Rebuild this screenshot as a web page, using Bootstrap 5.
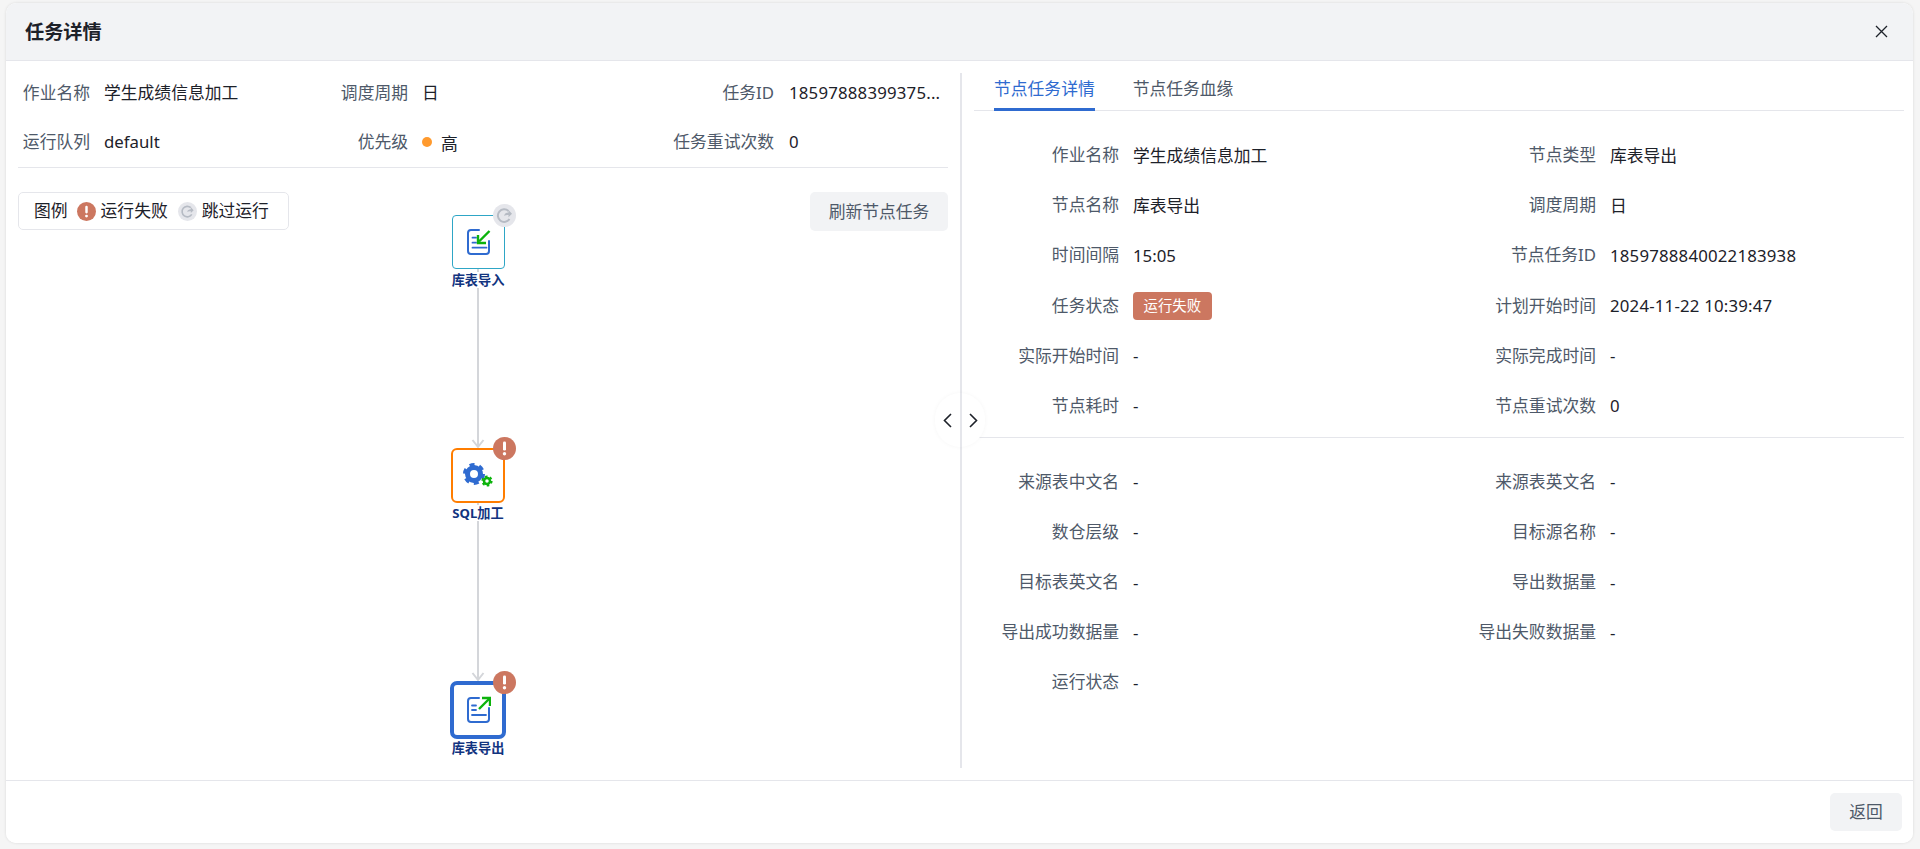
<!DOCTYPE html>
<html lang="zh-CN">
<head>
<meta charset="utf-8">
<title>任务详情</title>
<link href="https://cdn.jsdelivr.net/npm/bootstrap@5.3.0/dist/css/bootstrap.min.css" rel="stylesheet">
<style>
html,body{height:849px;overflow:hidden}
body{background:#f5f5f5;padding:3px 7px 6px 6px;font-family:"Noto Sans","Noto Sans CJK SC",sans-serif;font-size:16.8px;color:#1d2129}
.shell{height:840px;border:0;border-radius:10px;box-shadow:0 0 3px rgba(0,0,0,.12);overflow:hidden}
.shell .card-header{height:58px;background:#f2f3f5;border-bottom:1px solid #e5e6eb;padding:0 25px 0 19px;border-radius:10px 10px 0 0!important;flex:none}
.ttl{font-size:19.2px;font-weight:700;color:#1d2129;line-height:1}
.xbtn{width:13px;height:13px;display:flex;border:0;background:none;padding:0}
.shell .card-body{padding:0;min-height:0}
.leftp{width:954px;padding:0 12px;flex:none}
.info{display:grid;grid-template-columns:72px 246px 72px 241px 125px 174px;grid-auto-rows:49px;padding-top:8px;border-bottom:1px solid #e5e6eb;height:107px;align-items:center}
.lb{color:#4e5969;text-align:right;white-space:nowrap;line-height:1.2}
.val{padding-left:14px;white-space:nowrap;line-height:1.2}
.val.wide{padding-left:15px}
.num{letter-spacing:.2px}
.dotv{display:inline-block;width:10px;height:10px;border-radius:50%;background:#ff9a2e;margin-right:9px;vertical-align:1px}
.hi{position:relative;top:2px}
.canv{position:relative;height:612px}
.legend{position:absolute;left:0;top:24px;width:271px;height:38px;border:1px solid #e5e6eb;border-radius:5px;padding-left:15px;gap:5px}
.lgi{width:19px;height:19px;flex:none}
.lgi.first{margin-left:4px}
.lgi.sec{margin-left:5px}
.refbtn{position:absolute;right:0;top:24px;width:138px;height:39px;background:#f2f3f5;border:0;border-radius:5px;color:#4e5969;font-size:16.8px;padding:0}
.wire{position:absolute;left:0;top:0;width:930px;height:612px}
.gnode{position:absolute;background:#fff;display:flex;align-items:center;justify-content:center}
.n1{left:434px;top:47px;width:53px;height:54px;border:1px solid #2ea6c6;border-radius:4px}
.n2{left:433px;top:280px;width:54px;height:55px;border:2px solid #ff7d00;border-radius:6px}
.n3{left:432px;top:513px;width:56px;height:58px;border:4px solid #2f6bd0;border-radius:7px}
.gbadge{position:absolute;width:23px;height:23px}
.nlabel{position:absolute;width:80px;text-align:center;font-size:13.2px;font-weight:700;color:#12347f;line-height:16px;background:#fff}
.vdiv{width:2px;flex:none;background:#e5e6eb;margin:12px 0;position:relative}
.pill{position:absolute;left:-25px;top:320px;width:50px;height:54px;border-radius:25px;background:#fff;box-shadow:0 0 4px rgba(0,0,0,.04);z-index:1}
.pillline{position:absolute;left:0;top:320px;width:2px;height:54px;background:#e5e6eb;z-index:2}
.chev{position:absolute;width:9px;height:15px;top:340px;z-index:3}
.chev.lf{left:-17px}
.chev.rt{left:9px}
.rightp{padding:0 9px 0 12px;flex:1;min-width:0}
.tabbar{height:50px;border-bottom:1px solid #e5e6eb;padding-left:20px;gap:38px;flex-wrap:nowrap}
.tabbar .nav-link{padding:0;height:50px;line-height:55px;color:#4e5969;font-size:16.8px;border-bottom:3px solid transparent}
.tabbar .nav-link.active{color:#2f6bd0;border-bottom-color:#2f6bd0}
.dgrid{display:grid;grid-template-columns:477px 1fr;grid-auto-rows:50.2px;align-items:center}
.dcell{display:flex;gap:14px;align-items:center}
.dcell .lb{width:145px;flex:none}
.sec1{padding-top:19px}
.sep{border-top:1px solid #e5e6eb;margin:5.5px 0 19px 0}
.stag{display:inline-block;background:#cc7760;color:#fff;font-size:14.4px;line-height:28px;height:28px;padding:0 10.500px;border-radius:4px}
.shell .card-footer{height:63px;flex:none;background:#fff;border-top:1px solid #e5e6eb;padding:12px 11px 0 0;border-radius:0!important}
.backbtn{width:72px;height:38px;background:#f2f3f5;border:0;border-radius:5px;color:#4e5969;font-size:16.8px;padding:0}
</style>
</head>
<body>
<div class="card shell">
  <div class="card-header d-flex align-items-center justify-content-between">
    <span class="ttl">任务详情</span>
    <button type="button" class="xbtn" aria-label="关闭"><svg width="13" height="13" viewBox="0 0 13 13" fill="none" stroke="#1d2129" stroke-width="1.300"><path d="M1 1l11 11M12 1 1 12"/></svg></button>
  </div>
  <div class="card-body d-flex flex-grow-1">
    <div class="leftp">
      <div class="info">
        <div class="lb">作业名称</div><div class="val">学生成绩信息加工</div>
        <div class="lb">调度周期</div><div class="val">日</div>
        <div class="lb">任务ID</div><div class="val wide num">18597888399375...</div>
        <div class="lb">运行队列</div><div class="val">default</div>
        <div class="lb">优先级</div><div class="val"><span class="dotv"></span><span class="hi">高</span></div>
        <div class="lb">任务重试次数</div><div class="val wide">0</div>
      </div>
      <div class="canv">
        <svg class="wire" viewBox="0 0 930 612" fill="none" stroke="#d4d6da" stroke-width="2">
          <path d="M460 100V279"/><path d="M454.500 272l5.500 7 5.500-7"/>
          <path d="M460 334V512"/><path d="M454.500 505l5.500 7 5.500-7"/>
        </svg>
        <div class="legend d-flex align-items-center">
          <span>图例</span>
          <svg class="lgi first" viewBox="0 0 20 20"><circle cx="10" cy="10" r="10" fill="#cc7760"/><rect x="8.700" y="4" width="2.600" height="8" rx="1.200" fill="#fff"/><circle cx="10" cy="14.800" r="1.500" fill="#fff"/></svg>
          <span>运行失败</span>
          <svg class="lgi sec" viewBox="0 0 20 20"><circle cx="10" cy="10" r="10" fill="#e5e6eb"/><path d="M14.500 13a5.500 5.500 0 1 1 -1-7" fill="none" stroke="#b6bbc4" stroke-width="1.700"/><path d="M9.500 10.500c.5-2 2-3 4-3V5.500l3 3.200-3 3v-2c-1.600 0-3 .1-4 .8z" fill="#b6bbc4"/></svg>
          <span>跳过运行</span>
        </div>
        <button type="button" class="btn refbtn">刷新节点任务</button>

        <div class="gnode n1">
          <svg width="25" height="28" viewBox="0 0 25 28" fill="none"><path d="M13 2H5a3 3 0 0 0-3 3v18a3 3 0 0 0 3 3h15a3 3 0 0 0 3-3V13" stroke="#2f6bd0" stroke-width="2" stroke-linecap="round"/><path d="M6.500 9.700h3.500M6.500 14.700h3.500M6.500 19.700h14" stroke="#2f6bd0" stroke-width="1.800" stroke-linecap="round"/><path d="M23.500 3 13 13.500" stroke="#0cb30c" stroke-width="2.400"/><path d="M12 7v8h8" stroke="#0cb30c" stroke-width="2.400"/></svg>
        </div>
        <svg class="gbadge" style="left:475px;top:36px" viewBox="0 0 23 23"><circle cx="11.500" cy="11.500" r="11.500" fill="#e5e6eb"/><path d="M16.500 15a6.300 6.300 0 1 1-1-8" fill="none" stroke="#b6bbc4" stroke-width="2"/><path d="M11 12c.5-2.400 2.200-3.500 4.500-3.500V6l3.500 3.700-3.500 3.500V11c-1.800 0-3.400.2-4.500 1z" fill="#b6bbc4"/></svg>
        <div class="nlabel" style="left:420px;top:104px">库表导入</div>

        <div class="gnode n2">
          <svg width="30" height="26" viewBox="0 0 30 26"><circle cx="11" cy="11" r="6.500" fill="none" stroke="#2f6bd0" stroke-width="5"/><circle cx="11" cy="11" r="9.500" fill="none" stroke="#2f6bd0" stroke-width="3" stroke-dasharray="5 5"/><circle cx="24" cy="18" r="3" fill="none" stroke="#0cb30c" stroke-width="2.500"/><circle cx="24" cy="18" r="4.700" fill="none" stroke="#0cb30c" stroke-width="1.800" stroke-dasharray="2.500 2.400"/></svg>
        </div>
        <svg class="gbadge" style="left:475px;top:269px" viewBox="0 0 23 23"><circle cx="11.500" cy="11.500" r="11.500" fill="#cc7760"/><rect x="10" y="4.500" width="3" height="9" rx="1.300" fill="#fff"/><circle cx="11.500" cy="16.800" r="1.700" fill="#fff"/></svg>
        <div class="nlabel" style="left:420px;top:337px">SQL加工</div>

        <div class="gnode n3">
          <svg width="25" height="28" viewBox="0 0 25 28" fill="none"><path d="M13 2H5a3 3 0 0 0-3 3v18a3 3 0 0 0 3 3h15a3 3 0 0 0 3-3V12" stroke="#2f6bd0" stroke-width="2" stroke-linecap="round"/><path d="M6 9.500h4M6 14h4M6 19h14" stroke="#2f6bd0" stroke-width="1.800" stroke-linecap="round"/><path d="M13 13 23 3" stroke="#0cb30c" stroke-width="2.400"/><path d="M16 2h8v8" stroke="#0cb30c" stroke-width="2.400"/></svg>
        </div>
        <svg class="gbadge" style="left:475px;top:503px" viewBox="0 0 23 23"><circle cx="11.500" cy="11.500" r="11.500" fill="#cc7760"/><rect x="10" y="4.500" width="3" height="9" rx="1.300" fill="#fff"/><circle cx="11.500" cy="16.800" r="1.700" fill="#fff"/></svg>
        <div class="nlabel" style="left:420px;top:572px">库表导出</div>
      </div>
    </div>
    <div class="vdiv">
      <div class="pill"></div><div class="pillline"></div>
      <svg class="chev lf" viewBox="0 0 9 15" fill="none" stroke="#1d2129" stroke-width="1.600"><path d="M8 1 1.500 7.500 8 14"/></svg>
      <svg class="chev rt" viewBox="0 0 9 15" fill="none" stroke="#1d2129" stroke-width="1.600"><path d="M1 1l6.500 6.500L1 14"/></svg>
    </div>
    <div class="rightp">
      <ul class="nav tabbar">
        <li class="nav-item"><a class="nav-link active" href="#">节点任务详情</a></li>
        <li class="nav-item"><a class="nav-link" href="#">节点任务血缘</a></li>
      </ul>
      <div class="dgrid sec1">
        <div class="dcell"><div class="lb">作业名称</div><div>学生成绩信息加工</div></div>
        <div class="dcell"><div class="lb">节点类型</div><div>库表导出</div></div>
        <div class="dcell"><div class="lb">节点名称</div><div>库表导出</div></div>
        <div class="dcell"><div class="lb">调度周期</div><div>日</div></div>
        <div class="dcell"><div class="lb">时间间隔</div><div>15:05</div></div>
        <div class="dcell"><div class="lb">节点任务ID</div><div class="num">1859788840022183938</div></div>
        <div class="dcell"><div class="lb">任务状态</div><div><span class="stag">运行失败</span></div></div>
        <div class="dcell"><div class="lb">计划开始时间</div><div class="num">2024-11-22 10:39:47</div></div>
        <div class="dcell"><div class="lb">实际开始时间</div><div>-</div></div>
        <div class="dcell"><div class="lb">实际完成时间</div><div>-</div></div>
        <div class="dcell"><div class="lb">节点耗时</div><div>-</div></div>
        <div class="dcell"><div class="lb">节点重试次数</div><div>0</div></div>
      </div>
      <div class="sep"></div>
      <div class="dgrid">
        <div class="dcell"><div class="lb">来源表中文名</div><div>-</div></div>
        <div class="dcell"><div class="lb">来源表英文名</div><div>-</div></div>
        <div class="dcell"><div class="lb">数仓层级</div><div>-</div></div>
        <div class="dcell"><div class="lb">目标源名称</div><div>-</div></div>
        <div class="dcell"><div class="lb">目标表英文名</div><div>-</div></div>
        <div class="dcell"><div class="lb">导出数据量</div><div>-</div></div>
        <div class="dcell"><div class="lb">导出成功数据量</div><div>-</div></div>
        <div class="dcell"><div class="lb">导出失败数据量</div><div>-</div></div>
        <div class="dcell"><div class="lb">运行状态</div><div>-</div></div>
      </div>
    </div>
  </div>
  <div class="card-footer d-flex justify-content-end align-items-start">
    <button type="button" class="btn backbtn">返回</button>
  </div>
</div>
<script src="https://cdn.jsdelivr.net/npm/bootstrap@5.3.0/dist/js/bootstrap.bundle.min.js"></script>
</body>
</html>
